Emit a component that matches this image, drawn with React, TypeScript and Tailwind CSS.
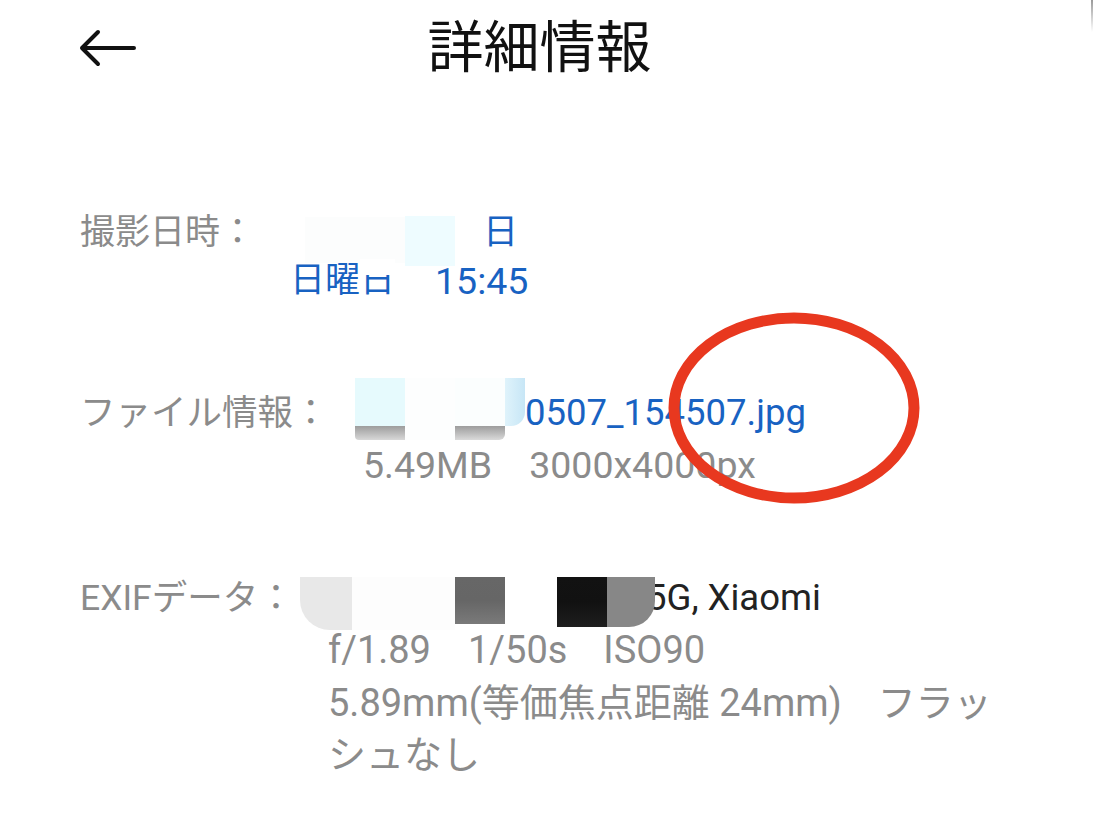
import React from 'react';

const font = { fontFamily: 'Roboto, "Noto Sans CJK JP", sans-serif' };

function BackArrow() {
  return (
    <svg width="60" height="44" viewBox="0 0 60 44" fill="none">
      <path d="M4 22H56M4 22L20 6M4 22L20 38" stroke="#111" strokeWidth="4" strokeLinecap="round" strokeLinejoin="round" />
    </svg>
  );
}

function Gap({ w }: { w: number }) {
  return <span className="inline-block" style={{ width: w }} />;
}

export default function App() {
  return (
    <div className="relative w-[1093px] h-[830px] bg-white overflow-hidden" style={font}>
      {/* header */}
      <header className="grid grid-cols-[1fr_auto_1fr] items-center h-[96px] pl-[78px] pr-[92px]">
        <div className="flex items-center">
          <BackArrow />
        </div>
        <h1 className="text-[56px] leading-none text-[#111] font-normal">詳細情報</h1>
        <div />
      </header>

      <div className="flex flex-col pl-[80px] pt-[113px] text-[35px] text-[#8b8b8b]">
        {/* 撮影日時 */}
        <div className="flex">
          <div className="w-[210px] shrink-0 leading-[48px]">撮影日時：</div>
          <div className="flex flex-col text-[#1862c2]">
            <div className="flex items-center h-[48px]">
              <Gap w={15} />
              <div className="w-[100px] h-[46px] bg-[#fcfdfd] mt-[14px]" />
              <div className="w-[50px] h-[50px] bg-[#eefcff] mt-[16px]" />
              <Gap w={28} />
              <span className="leading-[48px]">日</span>
            </div>
            <div className="flex items-center h-[48px] whitespace-nowrap">
              <span>日曜</span>
              <span className="relative">
                日
                <span className="absolute left-0 right-0 top-[4px] h-[16px] bg-white" />
              </span>
              <Gap w={40} />
              <span className="text-[37.5px]">15:45</span>
            </div>
          </div>
        </div>

        {/* ファイル情報 */}
        <div className="flex mt-[82px]">
          <div className="w-[275px] shrink-0 leading-[52px] text-[35.5px] whitespace-nowrap">ファイル情報：</div>
          <div className="flex flex-col">
            <div className="flex h-[52px] items-start">
              <div className="flex mt-[-9px]">
                <div className="flex flex-col">
                  <div className="w-[50px] h-[48px] bg-[#e6fafd]" />
                  <div className="w-[50px] h-[14px] bg-gradient-to-b from-[#9d9d9d] to-[#d8d8d8] rounded-bl-[4px]" />
                </div>
                <div className="w-[50px] h-[62px] bg-[#fdfefe]" />
                <div className="flex flex-col">
                  <div className="w-[50px] h-[48px] bg-[#fbfefe]" />
                  <div className="w-[50px] h-[14px] bg-gradient-to-b from-[#9d9d9d] to-[#dadada] rounded-br-[6px]" />
                </div>
                <div className="w-[20px] h-[48px] bg-gradient-to-r from-[#dff3fb] to-[#c7e6f6] rounded-br-[14px]" />
              </div>
              <span className="self-center text-[36.5px] leading-[52px] text-[#1862c2] whitespace-nowrap">0507_154507.jpg</span>
            </div>
            <div className="flex h-[52px] items-center whitespace-nowrap text-[37.5px]">
              <Gap w={8} />
              <span>5.49MB</span>
              <Gap w={37} />
              <span>3000x4000px</span>
            </div>
          </div>
        </div>

        {/* EXIF */}
        <div className="flex mt-[81px]">
          <div className="w-[220px] shrink-0 leading-[52px] text-[35.5px] whitespace-nowrap">EXIFデータ：</div>
          <div className="flex flex-col">
            <div className="flex h-[52px] items-start">
              <div className="relative z-10 flex mt-[5px]">
                <div className="w-[52px] h-[53px] bg-[#e8e8e8] rounded-bl-[30px]" />
                <div className="w-[103px] h-[53px] bg-[#fdfdfd]" />
                <div className="w-[50px] h-[47px] bg-gradient-to-b from-[#676767] via-[#666] to-[#7a7a7a]" />
                <div className="w-[52px] h-[53px] bg-white" />
                <div className="w-[50px] h-[50px] bg-gradient-to-b from-[#121212] via-[#111] to-[#1e1e1e]" />
                <div className="w-[48px] h-[50px] bg-[#878787] rounded-br-[26px]" />
              </div>
              <span className="self-center ml-[-9px] leading-[52px] text-[36.5px] text-[#222] whitespace-nowrap">5G, Xiaomi</span>
            </div>
            <div className="flex flex-col pl-[28px] whitespace-nowrap text-[38px]">
              <div className="flex h-[52px] items-center">
                <span>f/1.89</span>
                <Gap w={37} />
                <span>1/50s</span>
                <Gap w={36} />
                <span>ISO90</span>
              </div>
              <div className="flex h-[54px] items-center">
                <span>5.89mm(等価焦点距離 24mm)</span>
                <Gap w={36} />
                <span>フラッ</span>
              </div>
              <div className="flex h-[50px] items-center">
                <span>シュなし</span>
              </div>
            </div>
          </div>
        </div>
      </div>

      {/* red annotation circle */}
      <svg className="absolute left-[667px] top-[307px] pointer-events-none" width="254" height="202" viewBox="0 0 254 202">
        <ellipse cx="127" cy="101" rx="120" ry="90" fill="none" stroke="#e8381f" strokeWidth="11" />
      </svg>

      <div className="absolute right-0 top-0 w-[2px] h-[32px] bg-gradient-to-b from-[#9a9a9a] to-transparent" />
    </div>
  );
}
